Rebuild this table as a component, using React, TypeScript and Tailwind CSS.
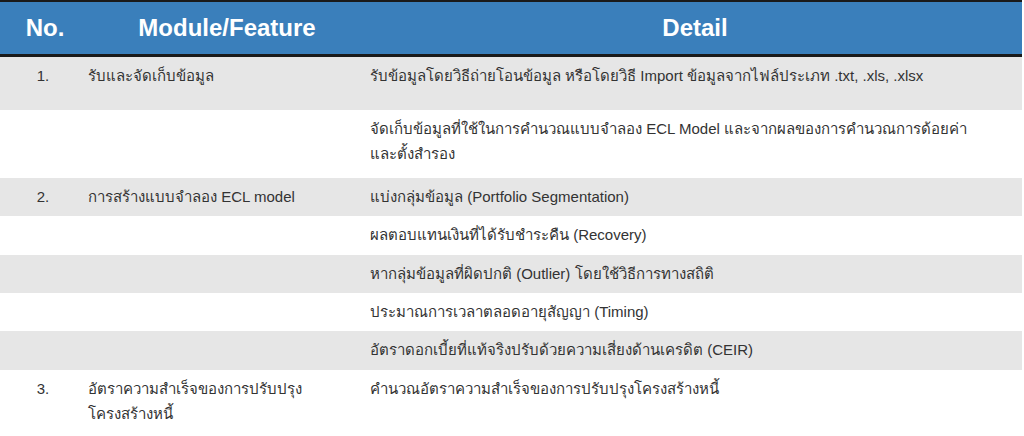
const rows: { no: string; module: string[]; detail: string[]; h: string; gray: boolean }[] = [
  { no: '1.', module: ['รับและจัดเก็บข้อมูล'], detail: ['รับข้อมูลโดยวิธีถ่ายโอนข้อมูล หรือโดยวิธี Import ข้อมูลจากไฟล์ประเภท .txt, .xls, .xlsx'], h: 'h-[53px]', gray: true },
  { no: '', module: [], detail: ['จัดเก็บข้อมูลที่ใช้ในการคำนวณแบบจำลอง ECL Model และจากผลของการคำนวณการด้อยค่า', 'และตั้งสำรอง'], h: 'h-[68px]', gray: false },
  { no: '2.', module: ['การสร้างแบบจำลอง ECL model'], detail: ['แบ่งกลุ่มข้อมูล (Portfolio Segmentation)'], h: 'h-[38px]', gray: true },
  { no: '', module: [], detail: ['ผลตอบแทนเงินที่ได้รับชำระคืน (Recovery)'], h: 'h-[39px]', gray: false },
  { no: '', module: [], detail: ['หากลุ่มข้อมูลที่ผิดปกติ (Outlier) โดยใช้วิธีการทางสถิติ'], h: 'h-[38px]', gray: true },
  { no: '', module: [], detail: ['ประมาณการเวลาตลอดอายุสัญญา (Timing)'], h: 'h-[38px]', gray: false },
  { no: '', module: [], detail: ['อัตราดอกเบี้ยที่แท้จริงปรับด้วยความเสี่ยงด้านเครดิต (CEIR)'], h: 'h-[39px]', gray: true },
  { no: '3.', module: ['อัตราความสำเร็จของการปรับปรุง', 'โครงสร้างหนี้'], detail: ['คำนวณอัตราความสำเร็จของการปรับปรุงโครงสร้างหนี้'], h: 'h-[70px]', gray: false },
];

export default function App() {
  return (
    <div className="w-[1024px] h-[436px] overflow-hidden bg-white font-['Liberation_Sans',Arial,sans-serif]">
      <div className="w-[1022px]">
        <div className="grid grid-cols-[86px_282px_1fr] h-[57px] bg-[#3a7fbb] border-t-2 border-b-[3px] border-[#1a1a1a] text-white font-bold text-[24px] items-center">
          <div className="text-center pl-1">No.</div>
          <div className="text-center">Module/Feature</div>
          <div className="text-center">Detail</div>
        </div>
        {rows.map((r, i) => (
          <div
            key={i}
            className={`grid grid-cols-[86px_282px_1fr] ${r.h} ${r.gray ? 'bg-[#e6e6e6]' : 'bg-white'} text-[15px] leading-[25px] text-[#333333]`}
          >
            <div className="text-center pt-[6px]">{r.no}</div>
            <div className="pl-[2px] pt-[6px]">
              {r.module.map((m, j) => (
                <div key={j}>{m}</div>
              ))}
            </div>
            <div className="pl-[2px] pt-[6px]">
              {r.detail.map((d, j) => (
                <div key={j}>{d}</div>
              ))}
            </div>
          </div>
        ))}
      </div>
    </div>
  );
}
